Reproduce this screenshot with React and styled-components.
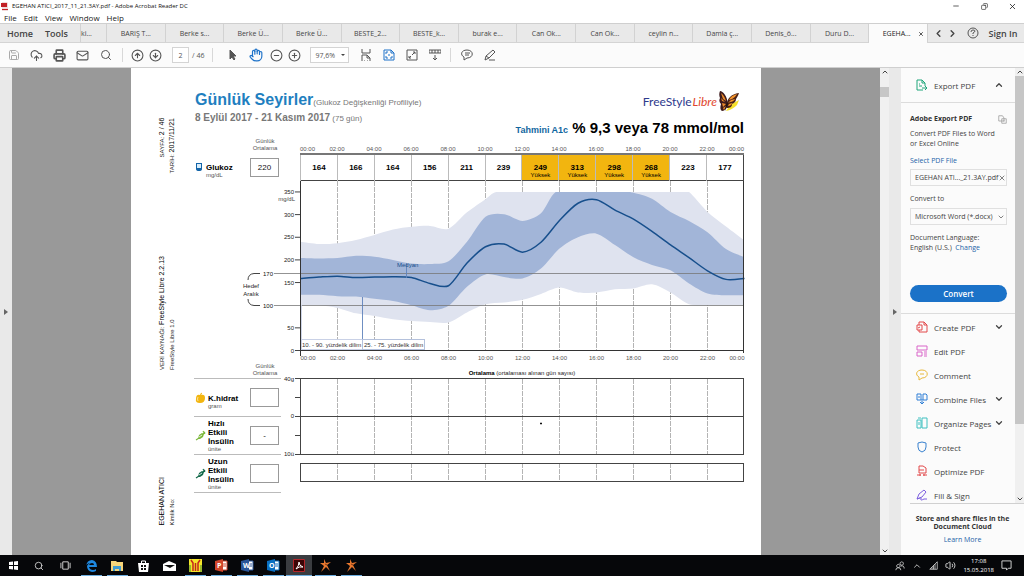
import React from "react";
import styled, { createGlobalStyle, css } from "styled-components";
import {
  ChevronDown,
  ChevronLeft,
  ChevronRight,
  ChevronUp,
  CircleArrowDown,
  CircleArrowUp,
  CircleMinus,
  CirclePlus,
  CloudUpload,
  Copy,
  Hand,
  Mail,
  Minus,
  Printer,
  Save,
  Search,
  Volume2,
  X
} from "lucide-react";

const ui = `"Open Sans", "Noto Sans", sans-serif`;
const doc = `"Liberation Sans", Arial, sans-serif`;

const GlobalStyle = createGlobalStyle`
  * {
    box-sizing: border-box;
  }

  html,
  body,
  #root {
    height: 100%;
    margin: 0;
  }

  body {
    overflow: hidden;
    font-family: ${ui};
    font-size: 7px;
    color: #444;
    background: #fff;
  }

  button,
  input,
  select {
    margin: 0;
    padding: 0;
    border: 0;
    border-radius: 0;
    font: inherit;
    color: inherit;
    background: none;
  }

  a {
    color: #1d63a8;
    text-decoration: none;
  }

  svg {
    display: block;
    flex: none;
  }
`;

const Window = styled.div`
  display: flex;
  flex-direction: column;
  height: 100%;
`;

/* Title bar and menu */

const TitleBar = styled.header`
  display: flex;
  align-items: center;
  gap: 4px;
  height: 12px;
  padding-left: 1px;
  font-size: 6px;
  color: #111;
`;

const Title = styled.span`
  flex: 1;
  white-space: nowrap;
`;

const WindowButton = styled.button`
  display: flex;
  justify-content: center;
  width: 24px;
`;

const MenuBar = styled.nav`
  display: flex;
  align-items: center;
  gap: 7px;
  height: 11px;
  padding-left: 4px;
  font-size: 8px;
  line-height: 11px;
  color: #222;
`;

/* Tabs */

const TabBar = styled.nav`
  display: flex;
  height: 20px;
  border-top: 1px solid #cfcfcf;
  border-bottom: 1px solid #d4d4d4;
  background: #e9e9e9;
`;

const MainTabs = styled.div`
  display: flex;
  align-items: center;
  justify-content: space-between;
  width: 80px;
  padding: 0 12px 0 7px;
  font-size: 9px;
  font-weight: 600;
`;

const CutTab = styled.button`
  width: 26px;
  border-left: 1px solid #d2d2d2;
  text-align: left;
  white-space: nowrap;
`;

const Tab = styled.button`
  display: flex;
  flex: 1;
  align-items: center;
  justify-content: center;
  border-left: 1px solid #d2d2d2;
  white-space: nowrap;

  ${props =>
    props.$active &&
    css`
      height: 19px;
      color: #222;
      background: #fbfbfb;
    `};
`;

const ActiveName = styled.span`
  margin: 0 7px 0 10px;
`;

const TabTools = styled.div`
  display: flex;
  align-items: center;
  width: 97px;
  padding-left: 4px;
  border-left: 1px solid #d2d2d2;
  font-size: 9px;
  font-weight: 600;
`;

const TabTool = styled.button`
  display: flex;
  justify-content: center;
  width: ${props => props.$width || 14}px;
  white-space: nowrap;
`;

/* Toolbar */

const ToolBar = styled.div`
  display: flex;
  align-items: center;
  height: 25px;
  padding-left: 2px;
  border-bottom: 1px solid #cfcfcf;
  color: #555;
  background: #fbfbfb;
`;

const Tool = styled.button`
  display: flex;
  justify-content: center;
  width: ${props => (props.$narrow ? 18 : 23)}px;
  color: ${props => props.$color || "#555"};
`;

const Divider = styled.span`
  width: 1px;
  height: 14px;
  margin: 0 ${props => props.$gap || 4}px;
  background: #d8d8d8;
`;

const PageInput = styled.input`
  width: 17px;
  height: 16px;
  margin: 0 3px 0 8px;
  border: 1px solid #d4d4d4;
  text-align: center;
  background: #fff;
`;

const ZoomBox = styled.label`
  display: flex;
  align-items: center;
  width: 39px;
  height: 16px;
  margin: 0 5px 0 7px;
  padding: 0 3px 0 4px;
  border: 1px solid #d4d4d4;
  background: #fff;
`;

const PlainSelect = styled.select`
  flex: 1;
  min-width: 0;
  appearance: none;
  outline: none;
`;

/* Work area */

const Work = styled.main`
  display: flex;
  flex: 1;
  min-height: 0;
`;

const Strip = styled.button`
  display: flex;
  align-items: center;
  justify-content: center;
  width: 12px;
  background: #e9e9e9;
`;

const Viewer = styled.section`
  flex: 1;
  min-width: 0;
  overflow: hidden;
  background: #999;
`;

const ScrollBar = styled.div`
  display: flex;
  flex-direction: column;
  align-items: center;
  justify-content: space-between;
  width: 9px;
  color: #444;
  background: #f0f0f0;
`;

const Thumb = styled.span`
  width: 100%;
  height: ${props => props.$height};
  margin-top: ${props => props.$top || 0}px;
  margin-bottom: auto;
  background: #c6c6c6;
`;

/* Report page */

const Paper = styled.article`
  display: flex;
  gap: 15px;
  width: 100%;
  max-width: 630px;
  height: 100%;
  margin: 0 auto;
  padding: 0 17px 0 26px;
  font-family: ${doc};
  font-size: 6px;
  line-height: 7px;
  color: #555;
  background: #fff;
`;

const Margin = styled.aside`
  display: flex;
  flex-direction: column;
  width: 22px;
  padding-top: 50px;
`;

const SideNote = styled.div`
  margin-bottom: ${props => props.$after || 0}px;
  writing-mode: vertical-rl;
  transform: rotate(180deg);
  line-height: 10px;
  text-align: ${props => (props.$top ? "end" : "start")};
  white-space: nowrap;
  color: #222;

  b {
    font-size: 7px;
    font-weight: 500;
    color: #000;
  }
`;

const Report = styled.div`
  flex: 1;
  min-width: 0;
  padding-top: 22px;
`;

const ReportHead = styled.header`
  display: flex;
  justify-content: space-between;
  height: 48px;
  padding-left: 1px;
`;

const Heading = styled.h1`
  margin: 1px 0 0;
  font-size: 16px;
  line-height: 18px;
  color: #1f7fc0;

  small {
    font-size: 8px;
    font-weight: 400;
    color: #777;
  }
`;

const Period = styled.p`
  margin: 0;
  font-size: 8px;
  line-height: 12px;
  color: #777;

  b {
    font-size: 10px;
  }
`;

const HeadRight = styled.div`
  display: flex;
  flex-direction: column;
  align-items: flex-end;
  gap: 6px;
`;

const Logo = styled.div`
  display: flex;
  align-items: center;
  height: 22px;
  padding-right: 3px;
  font-family: Lato, sans-serif;
  font-size: 12px;
  color: #2e3a8c;

  i {
    margin: 0 1px;
    color: #e0452b;
  }
`;

const Estimate = styled.p`
  margin: 0;
  font-size: 15px;
  font-weight: 700;
  line-height: 20px;
  color: #000;

  small {
    font-size: 9px;
    color: #11669f;
  }
`;

const Split = styled.div`
  display: grid;
  grid-template-columns: 87px 1fr;
  column-gap: ${props => props.$gap || 0}px;
  align-items: end;
`;

const AverageLabel = styled.div`
  width: 30px;
  height: 15px;
  margin-left: 56px;
  text-align: center;
`;

const Hours = styled.div`
  display: flex;
  justify-content: space-between;

  span {
    flex: 2;
    text-align: center;
  }

  span:first-child,
  span:last-child {
    flex: 1;
    text-align: left;
  }

  span:last-child {
    text-align: right;
  }
`;

const Averages = styled.table`
  width: 100%;
  height: 28px;
  border: 1px solid #444;
  border-top: 2px solid #777;
  border-collapse: collapse;
  table-layout: fixed;
  color: #000;
`;

const Average = styled.td`
  padding: ${props => (props.$high ? "7px 0 0" : "1px 0 0")};
  border-left: 1px solid #bbb;
  text-align: center;
  background: ${props => (props.$high ? "#f2b50f" : "#fff")};

  b {
    display: block;
    font-size: 8px;
    line-height: 8px;
  }
`;

const Metric = styled.div`
  display: flex;
  align-items: center;
  gap: 2px;
  height: ${props => (props.$ruled ? 38 : 28)}px;
  padding: 0 2px 0 1px;
  border-top: ${props => (props.$ruled ? "1px solid #bbb" : "0")};
`;

const MetricText = styled.div`
  flex: 1;
  padding-top: ${props => (props.$short ? 8 : 1)}px;

  b {
    display: block;
    font-size: 8px;
    line-height: 9px;
    color: #000;
  }
`;

const MetricBox = styled.div`
  width: 29px;
  height: 19px;
  border: 1px solid #999;
  font-size: 8px;
  line-height: 18px;
  text-align: center;
  color: #111;
`;

const Metrics = styled.div`
  align-self: start;
  border-bottom: 1px solid #bbb;
`;

const Chart = styled.svg`
  margin-left: auto;
  overflow: visible;
  font-family: ${doc};
  font-size: 6px;
`;

const Caption = styled.div`
  align-self: end;
  padding-bottom: 1px;
  text-align: center;
  color: #222;

  b {
    color: #000;
  }
`;

/* Tools panel */

const Panel = styled.aside`
  display: flex;
  flex-direction: column;
  width: 123px;
  background: #fbfbfb;
`;

const PanelScroll = styled.div`
  display: flex;
  flex: 1;
  min-height: 0;
`;

const PanelBody = styled.div`
  flex: 1;
  min-width: 0;
  overflow: hidden;
`;

const PanelRow = styled.button`
  display: flex;
  align-items: center;
  gap: 6px;
  width: 100%;
  height: ${props => (props.$head ? 35 : 24)}px;
  padding: 0 11px 0 15px;
  border-bottom: ${props => (props.$head ? "1px solid #dcdcdc" : "0")};
  font-size: 8px;
  text-align: left;
  white-space: nowrap;

  span {
    flex: 1;
    min-width: 0;
  }
`;

const ExportForm = styled.form`
  display: flex;
  flex-direction: column;
  height: 211px;
  padding: 11px 8px 11px 9px;
  border-bottom: 1px solid #dcdcdc;
  line-height: 10px;
  white-space: nowrap;
`;

const FormTitle = styled.div`
  display: flex;
  align-items: center;
  justify-content: space-between;
  margin-bottom: 5px;
  font-weight: 700;
  color: #333;
`;

const Para = styled.p`
  margin: 0 0 ${props => props.$after || 0}px;
`;

const Field = styled.div`
  display: flex;
  align-items: center;
  justify-content: space-between;
  height: 17px;
  margin: ${props => (props.$tight ? 3 : 4)}px 0 8px;
  padding: 0 1px 0 4px;
  border: 1px solid #e0e0e0;
`;

const Convert = styled.button`
  height: 17px;
  margin-top: auto;
  border-radius: 9px;
  font-size: 8px;
  font-weight: 600;
  color: #fff;
  background: #1b72c8;
`;

const ToolList = styled.div`
  padding-top: 1px;
`;

const PanelFoot = styled.footer`
  height: 52px;
  margin-left: 9px;
  padding: 11px 9px 0 0;
  border-top: 1px solid #d0d0d0;
  line-height: 8px;
  text-align: center;
  white-space: nowrap;

  b {
    display: block;
    margin-bottom: 5px;
    color: #333;
  }
`;

/* Taskbar */

const TaskBar = styled.footer`
  display: flex;
  height: 21px;
  color: #ddd;
  background: #06070a;
`;

const Task = styled.button`
  display: flex;
  align-items: center;
  justify-content: center;
  width: 26px;
  background-color: ${props => (props.$active ? "#3a3c40" : "transparent")};

  ${props =>
    props.$open &&
    css`
      background-image: linear-gradient(#6fb0e2, #6fb0e2);
      background-position: bottom;
      background-size: ${props.$active ? 26 : 21}px 1px;
      background-repeat: no-repeat;
    `};
`;

const Tray = styled.div`
  display: flex;
  align-items: center;
  gap: 7px;
  margin-left: auto;
  padding-right: 12px;
`;

const Clock = styled.time`
  font-size: 6px;
  line-height: 9px;
  text-align: center;
  color: #fff;
`;

/* Chart data: [hour, mg/dL] */

const hourly = values => values.map((v, i) => [i, v]);

const p90 = [
  ...hourly([240, 235, 237, 244, 255, 267, 273, 275, 269, 305, 334]),
  [10.6, 350],
  [12, 350],
  [20.5, 350],
  [21, 350],
  [22, 306],
  [23, 274],
  [24, 243]
];
const p75 = [
  ...hourly([204, 203, 204, 209, 207, 200, 192, 191, 197, 240, 295, 301, 286, 303]),
  [13.8, 350],
  [15, 350],
  [17.5, 350],
  [18, 348],
  [19, 335],
  [20, 306],
  [21, 286],
  [22, 261],
  [23, 224],
  [24, 206]
];
const median = hourly([
  159, 162, 164, 161, 162, 163, 161, 148, 143, 193, 229, 235, 217, 239, 287,
  325, 333, 310, 290, 263, 233, 205, 176, 157, 159
]);
const p25 = hourly([
  123, 123, 120, 119, 114, 109, 100, 89, 99, 141, 168, 162, 159, 181, 225, 250,
  258, 233, 206, 189, 177, 148, 126, 122, 122
]);
const p10 = hourly([
  100, 100, 94, 82, 76, 69, 65, 63, 62, 84, 102, 106, 112, 125, 139, 128, 128,
  135, 137, 146, 128, 102, 100, 100, 100
]);

const toX = hour => 60.5 + hour * 18.5;
const toY = value => 169.5 - value * 0.453;

const curve = points => {
  const pts = points.map(([h, v]) => [toX(h), toY(v)]);
  return pts.slice(1).reduce((d, p, i) => {
    const prev = pts[i];
    const before = pts[i - 1] || prev;
    const after = pts[i + 2] || p;
    const c1 = [prev[0] + (p[0] - before[0]) / 7, prev[1] + (p[1] - before[1]) / 7];
    const c2 = [p[0] - (after[0] - prev[0]) / 7, p[1] - (after[1] - prev[1]) / 7];
    return `${d} C${c1} ${c2} ${p}`;
  }, `${pts[0]}`);
};

const band = (top, bottom) =>
  `M${curve(top)} L${curve([...bottom].reverse())} Z`;

const evenHours = [0, 2, 4, 6, 8, 10, 12, 14, 16, 18, 20, 22, 24];
const hourLabel = h => `${String(h % 24).padStart(2, "0")}:00`;

const GlucoseChart = () => (
  <Chart width="504" height="182" viewBox="0 0 504 182">
    <clipPath id="range">
      <rect x="60" y="11" width="444" height="159" />
    </clipPath>
    {evenHours.slice(1, -1).map(h => (
      <path key={h} d={`M${toX(h)} 0V170`} stroke="#b4b4b4" strokeDasharray="5 1" />
    ))}
    <g clipPath="url(#range)">
      <path d={band(p90, p10)} fill="#dfe3ef" />
      <path d={band(p75, p25)} fill="#a2b5d8" />
    </g>
    <path d="M34 92.5H504M34 124.5H504" stroke="#777" strokeWidth="0.8" />
    <path d={`M${curve(median)}`} fill="none" stroke="#174f8c" strokeWidth="1.5" />
    <path d="M166.5 82V97M122.5 116V168" stroke="#5f82bb" strokeWidth="0.9" />
    <path d="M61.5 124V168" stroke="#c9d1e6" strokeWidth="0.9" />
    <rect x="61.5" y="158.5" width="61" height="10" fill="#fff" stroke="#c9d1e6" />
    <rect x="122.5" y="158.5" width="62" height="10" fill="#fff" stroke="#b4c1dc" />
    <text x="62" y="166" fill="#333">
      10. - 90. yüzdelik dilim
    </text>
    <text x="124" y="166" fill="#333">
      25. - 75. yüzdelik dilim
    </text>
    <text x="157" y="86" fill="#174f8c">
      Medyan
    </text>
    <path
      d="M60.5 0V175M503.5 0V172M55 169.5H504"
      fill="none"
      stroke="#333"
    />
    {[0, 50, 150, 200, 250, 300, 350].map(v => (
      <g key={v}>
        <path d={`M55 ${toY(v)}h5`} stroke="#444" />
        <text x="54" y={toY(v) + 2} textAnchor="end" fill="#222">
          {v}
        </text>
      </g>
    ))}
    <text x="55" y="20" textAnchor="end" fill="#444">
      mg/dL
    </text>
    <text x="33" y="95" textAnchor="end" fill="#111">
      170
    </text>
    <text x="33" y="127" textAnchor="end" fill="#111">
      100
    </text>
    <text x="11" y="107" textAnchor="middle" fill="#222">
      Hedef
    </text>
    <text x="11" y="115" textAnchor="middle" fill="#222">
      Aralık
    </text>
    <path
      d="M20 92.5H14Q8 93 8 99M20 124.5H14Q8 124 8 118"
      fill="none"
      stroke="#444"
    />
    {evenHours.map(h => (
      <text
        key={h}
        x={toX(h)}
        y="179"
        fill="#555"
        textAnchor={h === 0 ? "start" : h === 24 ? "end" : "middle"}
      >
        {hourLabel(h)}
      </text>
    ))}
  </Chart>
);

const DoseChart = () => (
  <Chart width="463" height="115" viewBox="0 0 463 115">
    {evenHours.slice(1, -1).map(h => (
      <path
        key={h}
        d={`M${19.5 + h * 18.5} 1V76M${19.5 + h * 18.5} 85V104`}
        stroke="#b4b4b4"
        strokeDasharray="5 1"
      />
    ))}
    <path
      d="M14 .5H463M14 38.5H463M14 76.5H463M14 19.5H19M14 57.5H19M19.5 0V77M462.5 0V77"
      fill="none"
      stroke="#444"
    />
    <rect x="19.5" y="85.5" width="443" height="18" fill="none" stroke="#444" />
    <g fill="#222" textAnchor="end">
      <text x="13" y="3">40g</text>
      <text x="13" y="40">0</text>
      <text x="13" y="78">10ü</text>
    </g>
    <path d="M259 45.5h2" stroke="#111" strokeWidth="1.4" />
  </Chart>
);

/* Drawings */

const Butterfly = () => (
  <svg width="23" height="23" viewBox="0 0 23 23">
    <path d="M8 21q6-1 11-6l2-5-9 5z" fill="#f6e02a" />
    <path d="M2 1c3 0 7 5 8 13-1 4-3 7-6 7-2-1-2-4-1-7-2-2-2-4-1-6-1-2-1-5 0-7z" fill="#3d1a1c" />
    <path d="M9 14c0-5 4-10 12-11-1 3-2 4-3 6 0 3-2 4-4 5 0 3-2 4-5 4z" fill="#4a2116" />
    <path d="M3 3c3 2 4 5 5 8L5 9zM3 8l4 4-3-1zM4 13l4 1-3 3zM5 18l3-2-2 4z" fill="#ea8a2a" />
    <path d="M11 10c1-3 4-5 8-6-1 2-3 4-5 5zM10 13l3-3 4-1c-1 2-3 3-5 3zM10 16l1-2 3-1c0 2-2 3-4 3z" fill="#f2932a" />
    <path d="M9 11l1 3-3 7z" fill="#20130f" />
  </svg>
);

const MeterIcon = () => (
  <svg width="9" height="10" viewBox="0 0 9 10">
    <path d="M1 1h6v6q0 2-3 2T1 7z" fill="#1264a8" />
    <path d="M2 2h4v4H2z" fill="#d9edfa" />
  </svg>
);

const AppleIcon = () => (
  <svg width="11" height="12" viewBox="0 0 11 12">
    <path d="M5 3q1-3 2-2 0 1-1 2 4-1 4 3 0 5-5 5T1 7q0-5 4-4z" fill="#f2b50f" />
    <path d="M3 5q-1 2 0 4" fill="none" stroke="#fff" strokeWidth="0.6" />
  </svg>
);

const PenIcon = ({ color }) => (
  <svg width="11" height="12" viewBox="0 0 11 12">
    <path d="M1 10l3-2M8 4l2-2M8 1l2 3" stroke={color} strokeWidth="1.2" />
    <path d="M3 9l1-4 3-2 2 1-1 3-3 2z" fill={color} />
    <path d="M4 7l3-2" stroke="#fff" strokeWidth="0.8" />
  </svg>
);

const PdfLogo = () => (
  <svg width="7" height="9" viewBox="0 0 7 9">
    <path d="M1 0h5l1 1v8H1z" fill="#f0dada" />
    <path d="M0 1h6v4H0zM1 7h6v1H1z" fill="#c22026" />
  </svg>
);

const Glyph = ({ d, color = "currentColor", size = 12, fill = "none" }) => (
  <svg
    width={size}
    height={size}
    viewBox="0 0 12 12"
    fill={fill}
    stroke={color}
    strokeWidth="1"
    strokeLinejoin="round"
  >
    <path d={d} />
  </svg>
);

const Triangle = () => (
  <svg width="4" height="6" viewBox="0 0 4 6">
    <path d="M0 0l4 3-4 3z" fill="#666" />
  </svg>
);

const OfficeIcon = ({ color, letter }) => (
  <svg width="13" height="13" viewBox="0 0 13 13">
    <path d="M6 2h6v9H6z" fill="#fff" stroke={color} />
    <path d="M8 5h3M8 7h3" stroke={color} />
    <path d="M0 2l8-2v13l-8-2z" fill={color} />
    <text x="2" y="9" fontSize="7" fontWeight="700" fill="#fff" fontFamily="Open Sans">
      {letter}
    </text>
  </svg>
);

const StarIcon = () => (
  <svg width="13" height="13" viewBox="0 0 13 13">
    <path d="M5 0l2 4 5-1-4 3 3 6-4-4-5 5 3-6-4-3h4z" fill="#e8772e" />
    <path d="M6 5l2 1" stroke="#7d3a18" />
  </svg>
);

const tabs = [
  "BARIŞ T...",
  "Berke s...",
  "Berke Ü...",
  "Berke Ü...",
  "BESTE_2...",
  "BESTE_k...",
  "burak e...",
  "Can Ok...",
  "Can Ok...",
  "ceylin n...",
  "Damla ç...",
  "Denis_ö...",
  "Duru D..."
];

const averages = [164, 166, 164, 156, 211, 239, 249, 313, 298, 268, 223, 177];

const panelTools = [
  {
    name: "Create PDF",
    more: true,
    color: "#e2494b",
    d: "M3 4V1h5l3 3v7H3V9M8 1v3h3M1 4h5v5H1zM2 7l2-1"
  },
  {
    name: "Edit PDF",
    color: "#d964c8",
    d: "M1 1h10v4H1zM1 7h5v4H1zM8 7h3M8 9h3M8 11h3"
  },
  {
    name: "Comment",
    color: "#e8b93c",
    d: "M6 1c7 0 7 8 0 8L3 11V8C-1 6 0 1 6 1zM4 5h4"
  },
  {
    name: "Combine Files",
    more: true,
    color: "#2f7fd6",
    d: "M1 3V1h4v6H1V5M7 1h3l1 1v5H7zM0 4h4M6 6v5M4 9l2 2 2-2"
  },
  {
    name: "Organize Pages",
    more: true,
    color: "#3fc0c0",
    d: "M1 3h4v8H1zM6 1h5v10H6zM2 1h3M3 5v3"
  },
  { name: "Protect", color: "#3a82cf", d: "M6 1l4 1v4q0 4-4 5-4-1-4-5V2z" },
  {
    name: "Optimize PDF",
    color: "#e2494b",
    d: "M3 8V1h4l3 2v5zM3 5h5M1 10h4M7 10h4M4 9v2M8 9v2"
  },
  {
    name: "Fill & Sign",
    color: "#7d5fe0",
    d: "M1 10l2-5 5-4 2 2-4 5-5 2q5-2 4 0t3 0h3"
  }
];

const App = () => (
  <Window>
    <GlobalStyle />
    <TitleBar>
      <PdfLogo />
      <Title>EGEHAN ATICI_2017_11_21.3AY.pdf - Adobe Acrobat Reader DC</Title>
      <WindowButton aria-label="Minimize">
        <Minus size={8} />
      </WindowButton>
      <WindowButton aria-label="Restore">
        <Copy size={7} transform="scale(-1 1)" />
      </WindowButton>
      <WindowButton aria-label="Close">
        <X size={9} />
      </WindowButton>
    </TitleBar>
    <MenuBar>
      {["File", "Edit", "View", "Window", "Help"].map(item => (
        <button key={item}>{item}</button>
      ))}
    </MenuBar>

    <TabBar>
      <MainTabs>
        <button>Home</button>
        <button>Tools</button>
      </MainTabs>
      <CutTab>ki...</CutTab>
      {tabs.map((tab, i) => (
        <Tab key={i}>{tab}</Tab>
      ))}
      <Tab $active>
        <ActiveName>EGEHA...</ActiveName>
        <X size={6} strokeWidth={3} />
      </Tab>
      <TabTools>
        <TabTool aria-label="Previous tab">
          <ChevronLeft size={11} strokeWidth={3} />
        </TabTool>
        <TabTool aria-label="Next tab">
          <ChevronRight size={11} strokeWidth={3} />
        </TabTool>
        <TabTool $width={26} aria-label="Help">
          <svg width="12" height="12" viewBox="0 0 12 12" fill="none" stroke="#555">
            <circle cx="6" cy="6" r="5" />
            <path d="M4 5q0-2 2-2t2 1q0 1-2 2v1M6 8v1" />
          </svg>
        </TabTool>
        <TabTool $width={34}>Sign In</TabTool>
      </TabTools>
    </TabBar>

    <ToolBar>
      <Tool $color="#aaa" aria-label="Save">
        <Save size={12} />
      </Tool>
      <Tool aria-label="Upload">
        <CloudUpload size={13} />
      </Tool>
      <Tool aria-label="Print">
        <Printer size={13} strokeWidth={3} />
      </Tool>
      <Tool aria-label="Mail">
        <Mail size={13} />
      </Tool>
      <Tool aria-label="Find">
        <Search size={12} />
      </Tool>
      <Divider $gap={5} />
      <Tool $narrow aria-label="Previous page">
        <CircleArrowUp size={13} />
      </Tool>
      <Tool $narrow aria-label="Next page">
        <CircleArrowDown size={13} />
      </Tool>
      <PageInput aria-label="Page" defaultValue="2" />
      <span>/ 46</span>
      <Divider $gap={8} />
      <Tool aria-label="Select">
        <Glyph d="M3 1v9l2-2 2 3 1-1-2-3h3z" fill="#555" />
      </Tool>
      <Tool $color="#1f73c9" aria-label="Pan">
        <Hand size={14} />
      </Tool>
      <Tool $narrow aria-label="Zoom out">
        <CircleMinus size={13} />
      </Tool>
      <Tool $narrow aria-label="Zoom in">
        <CirclePlus size={13} />
      </Tool>
      <ZoomBox>
        <PlainSelect aria-label="Zoom">
          <option>97,6%</option>
        </PlainSelect>
        <svg width="4" height="3" viewBox="0 0 4 3">
          <path d="M0 0h4L2 2z" fill="#444" />
        </svg>
      </ZoomBox>
      <Tool aria-label="Fit width">
        <Glyph d="M2 0v4h8V0M2 12V6h5l3 3v3M7 6v3h3M4 12h1M7 12h1" />
      </Tool>
      <Tool $color="#1f73c9" aria-label="Fit page">
        <Glyph d="M1 1h7l3 3v7H1zM8 1v3h3M3 5V3h2M7 9h2V7M3 7v2h2M5 6h2" />
      </Tool>
      <Tool aria-label="Full screen">
        <Glyph d="M1 1h10v10H1zM7 3h2v2M9 3L6 6M3 7v2h2M3 9l2-2" />
      </Tool>
      <Tool aria-label="Scroll mode">
        <Glyph d="M0 1h12v3H0zM3 1v3M6 1v3M9 1v3M6 6v5M4 9l2 2 2-2" />
      </Tool>
      <Divider />
      <Tool aria-label="Comment">
        <Glyph d="M6 1c7 0 7 8 0 8L3 11V8C-1 6 0 1 6 1zM4 4h5M4 6h4" />
      </Tool>
      <Tool aria-label="Highlight">
        <Glyph d="M1 11l1-4 7-6 2 2-6 6zM2 7l3 2M5 11h6" />
      </Tool>
    </ToolBar>

    <Work>
      <Strip aria-label="Open navigation pane">
        <Triangle />
      </Strip>
      <Viewer>
        <Paper>
          <Margin>
            <SideNote $top $after={83}>
              SAYFA: <b>2 / 46</b>
              <br />
              TARİH: <b>2017/11/21</b>
            </SideNote>
            <SideNote $after={106}>
              VERİ KAYNAĞI: <b>FreeStyle Libre 2.2.13</b>
              <br />
              FreeStyle Libre 1.0
            </SideNote>
            <SideNote>
              <b>EGEHAN ATICI</b>
              <br />
              Kimlik No:
            </SideNote>
          </Margin>
          <Report>
            <ReportHead>
              <div>
                <Heading>
                  Günlük Seyirler<small>(Glukoz Değişkenliği Profiliyle)</small>
                </Heading>
                <Period>
                  <b>8 Eylül 2017 - 21 Kasım 2017</b> (75 gün)
                </Period>
              </div>
              <HeadRight>
                <Logo>
                  FreeStyle<i>Libre</i>
                  <Butterfly />
                </Logo>
                <Estimate>
                  <small>Tahmini A1c</small> % 9,3 veya 78 mmol/mol
                </Estimate>
              </HeadRight>
            </ReportHead>

            <Split $gap={19}>
              <AverageLabel>Günlük Ortalama</AverageLabel>
              <Hours>
                {evenHours.map(h => (
                  <span key={h}>{hourLabel(h)}</span>
                ))}
              </Hours>
              <Metric>
                <MeterIcon />
                <MetricText $short>
                  <b>Glukoz</b>
                  mg/dL
                </MetricText>
                <MetricBox>220</MetricBox>
              </Metric>
              <Averages>
                <tbody>
                  <tr>
                    {averages.map((value, i) => (
                      <Average key={i} $high={value > 240}>
                        <b>{value}</b>
                        {value > 240 && "Yüksek"}
                      </Average>
                    ))}
                  </tr>
                </tbody>
              </Averages>
            </Split>

            <GlucoseChart />

            <Split $gap={19}>
              <AverageLabel>Günlük Ortalama</AverageLabel>
              <Caption>
                <b>Ortalama</b> (ortalaması alınan gün sayısı)
              </Caption>
            </Split>

            <Split>
              <Metrics>
                <Metric $ruled>
                  <AppleIcon />
                  <MetricText $short>
                    <b>K.hidrat</b>
                    gram
                  </MetricText>
                  <MetricBox />
                </Metric>
                <Metric $ruled>
                  <PenIcon color="#7cb83c" />
                  <MetricText>
                    <b>
                      Hızlı
                      <br />
                      Etkili
                      <br />
                      İnsülin
                    </b>
                    ünite
                  </MetricText>
                  <MetricBox>-</MetricBox>
                </Metric>
                <Metric $ruled>
                  <PenIcon color="#13694a" />
                  <MetricText>
                    <b>
                      Uzun
                      <br />
                      Etkili
                      <br />
                      İnsülin
                    </b>
                    ünite
                  </MetricText>
                  <MetricBox />
                </Metric>
              </Metrics>
              <DoseChart />
            </Split>
          </Report>
        </Paper>
      </Viewer>
      <ScrollBar>
        <ChevronUp size={8} strokeWidth={3} />
        <Thumb $top={11} $height="10px" />
        <ChevronDown size={8} strokeWidth={3} />
      </ScrollBar>
      <Strip aria-label="Close tools pane">
        <Triangle />
      </Strip>

      <Panel>
        <PanelScroll>
          <PanelBody>
            <PanelRow $head>
              <Glyph color="#1fa67a" d="M7 11H1V1h5l3 3v3M6 1v3h3M3 5h1M3 7h3M6 9h5M9 7l2 2-2 2" />
              <span>Export PDF</span>
              <ChevronUp size={10} strokeWidth={3} />
            </PanelRow>
            <ExportForm onSubmit={e => e.preventDefault()}>
              <FormTitle>
                Adobe Export PDF
                <Glyph size={9} color="#999" d="M1 1h5l2 3v4H1zM5 5h6v6H5zM7 8h2" />
              </FormTitle>
              <Para $after={7}>
                Convert PDF Files to Word
                <br />
                or Excel Online
              </Para>
              <a href="#select">Select PDF File</a>
              <Field $tight>
                EGEHAN ATI..._21.3AY.pdf
                <button type="button" aria-label="Remove file">
                  <X size={8} />
                </button>
              </Field>
              <label htmlFor="format">Convert to</label>
              <Field>
                <PlainSelect id="format">
                  <option>Microsoft Word (*.docx)</option>
                </PlainSelect>
                <ChevronDown size={8} />
              </Field>
              <Para>Document Language:</Para>
              <Para>
                English (U.S.) &nbsp;<a href="#language">Change</a>
              </Para>
              <Convert>Convert</Convert>
            </ExportForm>
            <ToolList>
              {panelTools.map(tool => (
                <PanelRow key={tool.name}>
                  <Glyph d={tool.d} color={tool.color} />
                  <span>{tool.name}</span>
                  {tool.more && <ChevronDown size={10} strokeWidth={3} />}
                </PanelRow>
              ))}
            </ToolList>
          </PanelBody>
          <ScrollBar>
            <ChevronUp size={8} strokeWidth={3} />
            <Thumb $height="80%" />
            <ChevronDown size={8} strokeWidth={3} />
          </ScrollBar>
        </PanelScroll>
        <PanelFoot>
          <b>
            Store and share files in the
            <br />
            Document Cloud
          </b>
          <a href="#more">Learn More</a>
        </PanelFoot>
      </Panel>
    </Work>

    <TaskBar>
      <Task aria-label="Start">
        <svg width="9" height="9" viewBox="0 0 9 9">
          <path d="M0 1l4-.5V4H0zM5 .4L9 0v4H5zM0 5h4v3.500L0 8zM5 5h4v4l-4-.4z" fill="#fff" />
        </svg>
      </Task>
      <Task aria-label="Search">
        <Search size={10} />
      </Task>
      <Task aria-label="Task view">
        <Glyph size={11} d="M3 2h6v8H3zM1 3v6M11 3v6" />
      </Task>
      <Task $open aria-label="Edge">
        <svg width="12" height="12" viewBox="0 0 12 12">
          <path d="M1 6Q2 0 7 0q5 1 5 7H4q1 3 4 3 2 0 3-1v2q-2 1-4 1-5-1-5-6 1-2 3-3-4 1-4 3zm3-1h5q0-2-2-2T4 5z" fill="#1e88e0" />
        </svg>
      </Task>
      <Task $open aria-label="Explorer">
        <svg width="12" height="12" viewBox="0 0 12 12">
          <path d="M0 1h5l1 1h6v9H0z" fill="#f5d57a" />
          <path d="M2 6h8v5H8V9H4v2H2z" fill="#3f9bd0" />
        </svg>
      </Task>
      <Task aria-label="Store">
        <svg width="11" height="12" viewBox="0 0 11 12">
          <path d="M3.500 4V1h4v3" fill="none" stroke="#fff" />
          <path d="M0 3h11l-1 9H1z" fill="#fff" />
          <path d="M3 5h2v2H3zM6 5h2v2H6zM3 8h2v2H3zM6 8h2v2H6z" fill="#111" />
        </svg>
      </Task>
      <Task aria-label="Mail app">
        <svg width="13" height="10" viewBox="0 0 13 10">
          <path d="M0 3l6-3 7 3v7H0z" fill="#fff" />
          <path d="M1 4h11L7 7z" fill="#111" />
        </svg>
      </Task>
      <Task $open aria-label="Patient records">
        <svg width="13" height="13" viewBox="0 0 13 13">
          <path d="M0 0h13v13H0z" fill="#f4e62a" />
          <path d="M2 1l2 3v8M11 1L9 4v8M6.500 4v8" fill="none" stroke="#c3261c" strokeWidth="1.500" />
          <path d="M1 6v7M12 6v7" stroke="#3c8c2e" />
        </svg>
      </Task>
      <Task $open aria-label="PowerPoint">
        <OfficeIcon color="#d0452b" letter="P" />
      </Task>
      <Task $open aria-label="Word">
        <OfficeIcon color="#2a5699" letter="W" />
      </Task>
      <Task $open aria-label="Outlook">
        <OfficeIcon color="#0a6fc2" letter="O" />
      </Task>
      <Task $open $active aria-label="Acrobat Reader">
        <svg width="12" height="13" viewBox="0 0 12 13">
          <path d="M.5.5h11v12H.5z" fill="#3b0506" stroke="#b3262a" />
          <path d="M3 10q3-3 3-7 0 4 4 5-4-1-7 2z" fill="none" stroke="#fff" />
        </svg>
      </Task>
      <Task $open aria-label="Glucose software">
        <StarIcon />
      </Task>
      <Task $open aria-label="Glucose software report">
        <StarIcon />
      </Task>
      <Tray>
        <Glyph size={10} d="M4 4a2 2 0 1 0 .1 0M1 11q0-3 3-3t3 3M8 1a2 2 0 1 0 .1 0M7 6q4-1 4 3" />
        <ChevronUp size={10} />
        <Glyph size={9} d="M1 11L11 1v10zM4 8v3M6 6v5M8 4v7" />
        <Volume2 size={11} />
        <Clock dateTime="2018-05-15T17:08">
          17:08
          <br />
          15.05.2018
        </Clock>
        <Glyph size={11} d="M1 1h10v8H8l-2 2V9H1z" />
      </Tray>
    </TaskBar>
  </Window>
);

export default App;
